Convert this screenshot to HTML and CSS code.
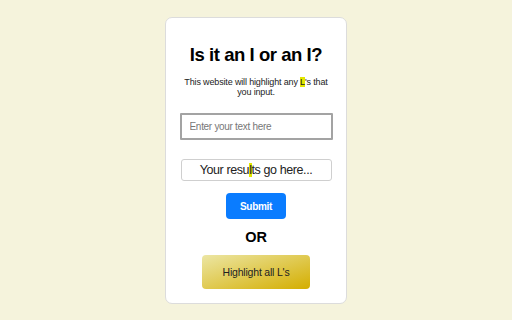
FILE: index.html
```html
<!DOCTYPE html>
<html>
<head>
<meta charset="utf-8">
<link rel="stylesheet" href="styles.css">
</head>
<body>
<div class="card">
  <h1 class="title">Is it an I or an I?</h1>
  <p class="sub">This website will highlight any <span class="hl">L</span>'s that you input.</p>
  <input class="field" type="text" placeholder="Enter your text here">
  <div class="results">Your resu<span class="hl">l</span>ts go here...</div>
  <button class="submit">Submit</button>
  <div class="or">OR</div>
  <button class="all">Highlight all L's</button>
</div>
</body>
</html>
```
FILE: styles.css
```css
html, body { margin: 0; padding: 0; }
body {
  background: #f5f3dc;
  font-family: "Liberation Sans", Arial, sans-serif;
  width: 512px;
  height: 320px;
  overflow: hidden;
}
.card {
  box-sizing: border-box;
  width: 182px;
  height: 287px;
  margin: 17px auto 0;
  background: #fff;
  border: 1px solid #dcdcdc;
  border-radius: 7px;
  display: flex;
  flex-direction: column;
  align-items: center;
  padding-top: 26px;
}
.title {
  margin: 0;
  font-size: 18.5px;
  line-height: 21px;
  letter-spacing: -0.45px;
  font-weight: bold;
  color: #000;
}
.sub {
  margin: 12px 0 0;
  font-size: 9px;
  line-height: 10px;
  letter-spacing: -0.15px;
  color: #222;
  text-align: center;
  width: 152px;
}
.hl { background: #e3e600; }
.field {
  box-sizing: border-box;
  margin-top: 16px;
  width: 153px;
  height: 27px;
  border: 2px solid #a3a3a3;
  border-radius: 1px;
  padding: 0 8px;
  font-family: "Liberation Sans", Arial, sans-serif;
  font-size: 10px;
  letter-spacing: -0.3px;
  color: #333;
  outline: none;
}
.field::placeholder { color: #777; }
.results {
  box-sizing: border-box;
  margin-top: 19px;
  width: 151px;
  height: 22px;
  border: 1px solid #cfcfcf;
  border-radius: 3px;
  font-size: 12.5px;
  letter-spacing: -0.4px;
  line-height: 20px;
  text-align: center;
  color: #222;
}
.submit {
  box-sizing: border-box;
  margin-top: 12px;
  width: 60px;
  height: 26px;
  border: none;
  border-radius: 4px;
  background: #0a7cff;
  color: #fff;
  font-family: "Liberation Sans", Arial, sans-serif;
  font-weight: bold;
  font-size: 10px;
  letter-spacing: -0.3px;
  padding: 0;
}
.or {
  margin-top: 10px;
  font-size: 14.5px;
  line-height: 17px;
  font-weight: bold;
  color: #000;
}
.all {
  box-sizing: border-box;
  margin-top: 9px;
  width: 108px;
  height: 34px;
  border: none;
  border-radius: 4px;
  background: linear-gradient(to bottom right, #ece6a4, #d4ae00);
  color: #222;
  font-family: "Liberation Sans", Arial, sans-serif;
  font-size: 10.5px;
  letter-spacing: -0.2px;
  padding: 0;
}
```
